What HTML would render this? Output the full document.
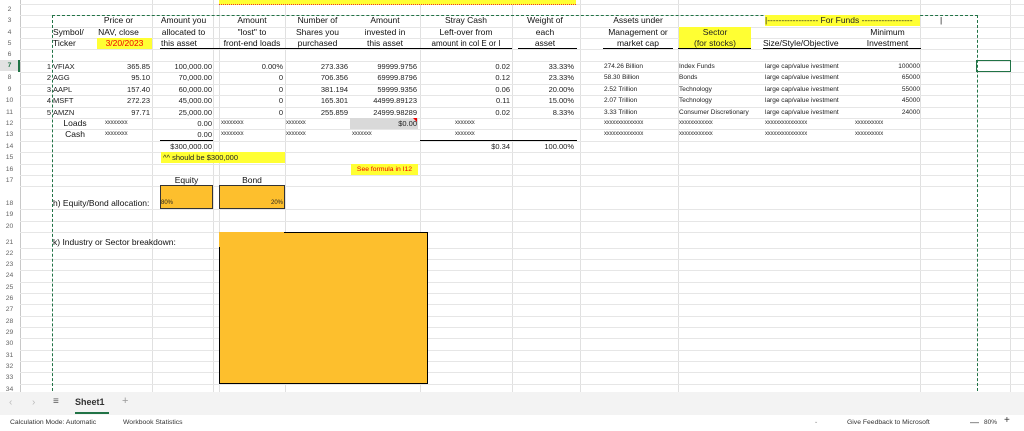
<!DOCTYPE html>
<html><head><meta charset="utf-8"><style>
body{margin:0;width:1024px;height:431px;overflow:hidden;background:#fff;font-family:"Liberation Sans",sans-serif;position:relative}
div{position:absolute;white-space:nowrap}
.t{font-size:7.5px;line-height:11.4px;height:11.4px;color:#222}
.h{font-size:8.5px;line-height:11.4px;height:11.4px;color:#111;text-align:center}
.r{text-align:right}
.rn{left:0;width:19px;text-align:center;font-size:6.8px;color:#666;line-height:11.4px}
.vl{width:1px;background:#e0e0e0;top:0;height:392px}
.hl{height:1px;background:#e6e6e6;left:20px;width:1004px}
.bl{height:1px;background:#000}
.x{font-size:6px;color:#333;letter-spacing:-.2px}
</style></head><body>
<div class="vl" style="left:20px;background:#c8c8c8"></div>
<div class="vl" style="left:152px"></div><div class="vl" style="left:213px"></div><div class="vl" style="left:219px"></div><div class="vl" style="left:285px"></div>
<div class="vl" style="left:420px"></div><div class="vl" style="left:512px"></div><div class="vl" style="left:580px"></div><div class="vl" style="left:678px"></div><div class="vl" style="left:920px"></div><div class="vl" style="left:1010px"></div>
<div class="hl" style="top:4px"></div><div class="hl" style="top:15px"></div><div class="hl" style="top:27px"></div><div class="hl" style="top:38px"></div><div class="hl" style="top:49px"></div><div class="hl" style="top:61px"></div><div class="hl" style="top:72px"></div><div class="hl" style="top:84px"></div><div class="hl" style="top:95px"></div><div class="hl" style="top:107px"></div><div class="hl" style="top:118px"></div><div class="hl" style="top:129px"></div><div class="hl" style="top:141px"></div><div class="hl" style="top:152px"></div><div class="hl" style="top:164px"></div><div class="hl" style="top:175px"></div><div class="hl" style="top:186px"></div><div class="hl" style="top:209px"></div><div class="hl" style="top:221px"></div><div class="hl" style="top:232px"></div><div class="hl" style="top:248px"></div><div class="hl" style="top:259px"></div><div class="hl" style="top:270px"></div><div class="hl" style="top:282px"></div><div class="hl" style="top:293px"></div><div class="hl" style="top:304px"></div><div class="hl" style="top:316px"></div><div class="hl" style="top:327px"></div><div class="hl" style="top:338px"></div><div class="hl" style="top:350px"></div><div class="hl" style="top:361px"></div><div class="hl" style="top:372px"></div><div class="hl" style="top:384px"></div>
<div class="rn" style="top:-7px">1</div><div class="rn" style="top:4px">2</div><div class="rn" style="top:15px">3</div><div class="rn" style="top:27px">4</div><div class="rn" style="top:38px">5</div><div class="rn" style="top:49px">6</div><div class="rn" style="top:60px;color:#217346;font-weight:bold;background:#e2e2e2">7</div><div class="rn" style="top:72px">8</div><div class="rn" style="top:84px">9</div><div class="rn" style="top:95px">10</div><div class="rn" style="top:107px">11</div><div class="rn" style="top:118px">12</div><div class="rn" style="top:129px">13</div><div class="rn" style="top:141px">14</div><div class="rn" style="top:152px">15</div><div class="rn" style="top:164px">16</div><div class="rn" style="top:175px">17</div><div class="rn" style="top:198px">18</div><div class="rn" style="top:209px">19</div><div class="rn" style="top:221px">20</div><div class="rn" style="top:237px">21</div><div class="rn" style="top:248px">22</div><div class="rn" style="top:259px">23</div><div class="rn" style="top:270px">24</div><div class="rn" style="top:282px">25</div><div class="rn" style="top:293px">26</div><div class="rn" style="top:304px">27</div><div class="rn" style="top:316px">28</div><div class="rn" style="top:327px">29</div><div class="rn" style="top:338px">30</div><div class="rn" style="top:350px">31</div><div class="rn" style="top:361px">32</div><div class="rn" style="top:372px">33</div><div class="rn" style="top:384px;height:8px;overflow:hidden">34</div>
<div style="left:0;top:60px;width:20px;height:12px;border-right:2px solid #217346;box-sizing:border-box"></div>
<div style="left:219px;top:0;width:357px;height:4px;background:#ffff33;border-bottom:1px dotted #e33"></div>
<div style="left:52px;top:15px;width:924px;height:380px;border-left:1px dashed #217346;border-top:1px dashed #217346;border-right:1px dashed #217346"></div>
<div style="left:976px;top:60px;width:33px;height:10px;border:1.5px solid #217346"></div>
<div class="h" style="left:53px;top:27px;text-align:left">Symbol/</div>
<div class="h" style="left:53px;top:38px;text-align:left">Ticker</div>
<div class="h" style="left:85px;width:67px;top:15px">Price or</div>
<div class="h" style="left:85px;width:67px;top:27px">NAV, close</div>
<div class="h" style="left:97px;width:55px;top:38px;background:#ffff33;color:#e00">3/20/2023</div>
<div class="h" style="left:152px;width:63px;top:15px">Amount you</div>
<div class="h" style="left:152px;width:63px;top:27px">allocated to</div>
<div class="h" style="left:152px;width:63px;top:38px;text-align:left;padding-left:9px">this asset</div>
<div class="h" style="left:219px;width:66px;top:15px">Amount</div>
<div class="h" style="left:219px;width:66px;top:27px">"lost" to</div>
<div class="h" style="left:216px;width:72px;top:38px">front-end loads</div>
<div class="h" style="left:285px;width:65px;top:15px">Number of</div>
<div class="h" style="left:285px;width:65px;top:27px">Shares you</div>
<div class="h" style="left:285px;width:65px;top:38px">purchased</div>
<div class="h" style="left:350px;width:70px;top:15px">Amount</div>
<div class="h" style="left:350px;width:70px;top:27px">invested in</div>
<div class="h" style="left:350px;width:70px;top:38px">this asset</div>
<div class="h" style="left:420px;width:92px;top:15px">Stray Cash</div>
<div class="h" style="left:420px;width:92px;top:27px">Left-over from</div>
<div class="h" style="left:420px;width:92px;top:38px;font-size:8px">amount in col E or I</div>
<div class="h" style="left:515px;width:60px;top:15px">Weight of</div>
<div class="h" style="left:515px;width:60px;top:27px">each</div>
<div class="h" style="left:515px;width:60px;top:38px">asset</div>
<div class="h" style="left:600px;width:76px;top:15px">Assets under</div>
<div class="h" style="left:600px;width:76px;top:27px">Management or</div>
<div class="h" style="left:600px;width:76px;top:38px">market cap</div>
<div class="h" style="left:679px;width:72px;top:27px;height:22px;background:#ffff33;color:#222">Sector<br>(for stocks)</div>
<div class="h" style="left:765px;width:155px;top:15px;background:#ffff33;text-align:left;color:#222">|------------------ For Funds ------------------</div>
<div class="h" style="left:940px;top:15px">|</div>
<div class="h" style="left:855px;width:65px;top:27px">Minimum</div>
<div class="h" style="left:763px;top:38px;text-align:left">Size/Style/Objective</div>
<div class="h" style="left:855px;width:65px;top:38px">Investment</div>
<div class="bl" style="left:160px;width:260px;top:48px"></div>
<div class="bl" style="left:420px;width:92px;top:48px"></div>
<div class="bl" style="left:518px;width:59px;top:48px"></div>
<div class="bl" style="left:603px;width:70px;top:48px"></div>
<div class="bl" style="left:678px;width:73px;top:48px"></div>
<div class="bl" style="left:763px;width:158px;top:48px"></div>
<div class="t r" style="left:20px;width:31px;top:61px">1</div><div class="t r" style="left:20px;width:31px;top:72px">2</div><div class="t r" style="left:20px;width:31px;top:84px">3</div><div class="t r" style="left:20px;width:31px;top:95px">4</div><div class="t r" style="left:20px;width:31px;top:107px">5</div>
<div class="t" style="left:53px;top:61px">VFIAX</div><div class="t" style="left:53px;top:72px">AGG</div><div class="t" style="left:53px;top:84px">AAPL</div><div class="t" style="left:53px;top:95px">MSFT</div><div class="t" style="left:53px;top:107px">AMZN</div>
<div class="t r" style="left:90px;width:60px;top:61px">365.85</div><div class="t r" style="left:90px;width:60px;top:72px">95.10</div><div class="t r" style="left:90px;width:60px;top:84px">157.40</div><div class="t r" style="left:90px;width:60px;top:95px">272.23</div><div class="t r" style="left:90px;width:60px;top:107px">97.71</div>
<div class="t r" style="left:150px;width:62px;top:61px">100,000.00</div><div class="t r" style="left:150px;width:62px;top:72px">70,000.00</div><div class="t r" style="left:150px;width:62px;top:84px">60,000.00</div><div class="t r" style="left:150px;width:62px;top:95px">45,000.00</div><div class="t r" style="left:150px;width:62px;top:107px">25,000.00</div>
<div class="t r" style="left:220px;width:63px;top:61px">0.00%</div><div class="t r" style="left:220px;width:63px;top:72px">0</div><div class="t r" style="left:220px;width:63px;top:84px">0</div><div class="t r" style="left:220px;width:63px;top:95px">0</div><div class="t r" style="left:220px;width:63px;top:107px">0</div>
<div class="t r" style="left:285px;width:63px;top:61px">273.336</div><div class="t r" style="left:285px;width:63px;top:72px">706.356</div><div class="t r" style="left:285px;width:63px;top:84px">381.194</div><div class="t r" style="left:285px;width:63px;top:95px">165.301</div><div class="t r" style="left:285px;width:63px;top:107px">255.859</div>
<div class="t r" style="left:350px;width:67px;top:61px">99999.9756</div><div class="t r" style="left:350px;width:67px;top:72px">69999.8796</div><div class="t r" style="left:350px;width:67px;top:84px">59999.9356</div><div class="t r" style="left:350px;width:67px;top:95px">44999.89123</div><div class="t r" style="left:350px;width:67px;top:107px">24999.98289</div>
<div class="t r" style="left:440px;width:70px;top:61px">0.02</div><div class="t r" style="left:440px;width:70px;top:72px">0.12</div><div class="t r" style="left:440px;width:70px;top:84px">0.06</div><div class="t r" style="left:440px;width:70px;top:95px">0.11</div><div class="t r" style="left:440px;width:70px;top:107px">0.02</div>
<div class="t r" style="left:515px;width:59px;top:61px">33.33%</div><div class="t r" style="left:515px;width:59px;top:72px">23.33%</div><div class="t r" style="left:515px;width:59px;top:84px">20.00%</div><div class="t r" style="left:515px;width:59px;top:95px">15.00%</div><div class="t r" style="left:515px;width:59px;top:107px">8.33%</div>
<div class="t" style="left:604px;top:61px;font-size:6.5px">274.26 Billion</div><div class="t" style="left:604px;top:72px;font-size:6.5px">58.30 Billion</div><div class="t" style="left:604px;top:84px;font-size:6.5px">2.52 Trillion</div><div class="t" style="left:604px;top:95px;font-size:6.5px">2.07 Trillion</div><div class="t" style="left:604px;top:107px;font-size:6.5px">3.33 Trillion</div>
<div class="t" style="left:679px;top:61px;font-size:6.5px">Index Funds</div><div class="t" style="left:679px;top:72px;font-size:6.5px">Bonds</div><div class="t" style="left:679px;top:84px;font-size:6.5px">Technology</div><div class="t" style="left:679px;top:95px;font-size:6.5px">Technology</div><div class="t" style="left:679px;top:107px;font-size:6.5px">Consumer Discretionary</div>
<div class="t" style="left:765px;top:61px;font-size:6.5px">large cap/value ivestment</div><div class="t" style="left:765px;top:72px;font-size:6.5px">large cap/value ivestment</div><div class="t" style="left:765px;top:84px;font-size:6.5px">large cap/value ivestment</div><div class="t" style="left:765px;top:95px;font-size:6.5px">large cap/value ivestment</div><div class="t" style="left:765px;top:107px;font-size:6.5px">large cap/value ivestment</div>
<div class="t r" style="left:860px;width:60px;top:61px;font-size:6.5px">100000</div><div class="t r" style="left:860px;width:60px;top:72px;font-size:6.5px">65000</div><div class="t r" style="left:860px;width:60px;top:84px;font-size:6.5px">55000</div><div class="t r" style="left:860px;width:60px;top:95px;font-size:6.5px">45000</div><div class="t r" style="left:860px;width:60px;top:107px;font-size:6.5px">24000</div>
<div class="h" style="left:52px;width:46px;top:118px">Loads</div><div class="h" style="left:52px;width:46px;top:129px">Cash</div>
<div class="t x" style="left:105px;top:118px">xxxxxxxx</div><div class="t x" style="left:105px;top:129px">xxxxxxxx</div>
<div class="t r" style="left:150px;width:62px;top:118px">0.00</div><div class="t r" style="left:150px;width:62px;top:129px">0.00</div>
<div class="t x" style="left:221px;top:118px">xxxxxxxx</div><div class="t x" style="left:221px;top:129px">xxxxxxxx</div>
<div class="t x" style="left:286px;top:118px">xxxxxxx</div><div class="t x" style="left:286px;top:129px">xxxxxxx</div>
<div class="t r" style="left:350px;width:67px;top:118px;background:#d9d9d9;padding-right:1px">$0.00</div>
<div style="left:413px;top:118px;width:0;height:0;border-left:4px solid transparent;border-top:4px solid #e00"></div>
<div class="t x" style="left:352px;top:129px">xxxxxxx</div>
<div class="t x" style="left:455px;top:118px">xxxxxxx</div><div class="t x" style="left:455px;top:129px">xxxxxxx</div>
<div class="t x" style="left:604px;top:118px">xxxxxxxxxxxxxx</div><div class="t x" style="left:604px;top:129px">xxxxxxxxxxxxxx</div>
<div class="t x" style="left:679px;top:118px">xxxxxxxxxxxx</div><div class="t x" style="left:679px;top:129px">xxxxxxxxxxxx</div>
<div class="t x" style="left:765px;top:118px">xxxxxxxxxxxxxxx</div><div class="t x" style="left:765px;top:129px">xxxxxxxxxxxxxxx</div>
<div class="t x" style="left:855px;top:118px">xxxxxxxxxx</div><div class="t x" style="left:855px;top:129px">xxxxxxxxxx</div>
<div class="bl" style="left:160px;width:53px;top:140px"></div>
<div class="bl" style="left:420px;width:157px;top:140px"></div>
<div class="t r" style="left:150px;width:62px;top:141px">$300,000.00</div>
<div class="t r" style="left:440px;width:70px;top:141px">$0.34</div>
<div class="t r" style="left:515px;width:59px;top:141px">100.00%</div>
<div class="t" style="left:161px;top:152px;width:124px;background:#ffff33;padding-left:2px;box-sizing:border-box">^^ should be $300,000</div>
<div class="t" style="left:351px;top:164px;width:67px;background:#ffff33;color:#e00;font-size:6.8px;text-align:center">See formula in I12</div>
<div class="h" style="left:160px;width:53px;top:175px">Equity</div>
<div class="h" style="left:219px;width:66px;top:175px">Bond</div>
<div style="left:160px;top:185px;width:53px;height:24px;background:#fdbf2d;border:1px solid #333;box-sizing:border-box"></div>
<div style="left:219px;top:185px;width:66px;height:24px;background:#fdbf2d;border:1px solid #333;box-sizing:border-box"></div>
<div class="h" style="left:53px;top:198px;text-align:left">h) Equity/Bond allocation:</div>
<div class="t" style="left:161px;top:198px;font-size:6px">80%</div>
<div class="t r" style="left:219px;width:64px;top:198px;font-size:6px">20%</div>
<div class="h" style="left:53px;top:237px;text-align:left">k) Industry or Sector breakdown:</div>
<div style="left:219px;top:232px;width:209px;height:152px;background:#fdbf2d"></div>
<div style="left:284px;top:232px;width:144px;height:0;border-top:1px solid #000"></div>
<div style="left:427px;top:232px;width:1px;height:152px;background:#000"></div>
<div style="left:219px;top:383px;width:209px;height:1px;background:#000"></div>
<div style="left:219px;top:247px;width:1px;height:137px;background:#000"></div>
<div style="left:0;top:392px;width:1024px;height:23px;background:#f3f3f3"></div>
<div style="left:9px;top:397px;font-size:10px;color:#bbb">&lsaquo;</div>
<div style="left:32px;top:397px;font-size:10px;color:#bbb">&rsaquo;</div>
<div style="left:53px;top:396px;font-size:10px;color:#555">&#8801;</div>
<div style="left:75px;top:397px;font-size:9px;font-weight:bold;color:#333">Sheet1</div>
<div style="left:75px;top:412px;width:34px;height:2px;background:#217346"></div>
<div style="left:122px;top:395px;font-size:11px;color:#999">+</div>
<div style="left:10px;top:419px;font-size:6.8px;color:#333">Calculation Mode: Automatic</div>
<div style="left:123px;top:419px;font-size:6.8px;color:#333">Workbook Statistics</div>
<div style="left:814px;top:419px;font-size:5px;color:#888">&#8964;</div>
<div style="left:847px;top:419px;font-size:6.8px;color:#333">Give Feedback to Microsoft</div>
<div style="left:970px;top:417px;font-size:9px;color:#333">&#8212;</div>
<div style="left:984px;top:419px;font-size:6.5px;color:#333">80%</div>
<div style="left:1004px;top:415px;font-size:10px;color:#333">+</div>
</body></html>
